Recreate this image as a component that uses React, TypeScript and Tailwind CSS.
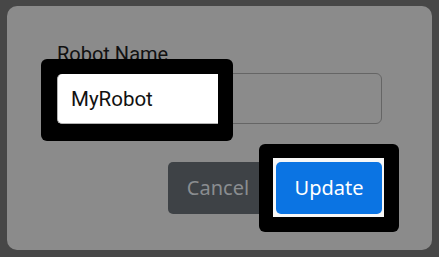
import React from "react";

export default function App() {
  return (
    <div className="relative w-[439px] h-[257px] bg-[#474747] pt-[6px] pl-[7px] pr-[7px] pb-[7px] overflow-hidden">
      <div className="w-full h-full rounded-[10px] bg-[#8b8b8b] pt-[36px] pl-[50px] pr-[50px] flex flex-col">
        <div
          className="text-[20px] leading-[24px] text-[#111]"
          style={{ fontFamily: "Roboto, sans-serif" }}
        >
          Robot Name
        </div>
        <div className="mt-[7px] h-[51px] w-full rounded-[6px] border border-[#656565]" />
        <div className="mt-[38px] flex justify-end gap-[8px]">
          <div
            className="h-[52px] w-[100px] rounded-[5px] bg-[#3e4246] text-[#8a8d90] text-[20px] flex items-center justify-center"
            style={{ fontFamily: "'Noto Sans', sans-serif" }}
          >
            Cancel
          </div>
          <div className="h-[52px] w-[106px]" />
        </div>
      </div>

      {/* spotlight 1 */}
      <div className="absolute left-[41px] top-[59px] w-[192px] h-[82px] rounded-[6px] bg-black overflow-hidden">
        <div className="absolute left-[16px] top-[15px] w-[161px] h-[50px] bg-white rounded-tl-[5px] rounded-bl-[5px] border-l border-b border-[#b3b3b3] flex items-center pl-[13px]">
          <span
            className="text-[20.5px] leading-[24px] text-[#111]"
            style={{ fontFamily: "Roboto, sans-serif" }}
          >
            MyRobot
          </span>
        </div>
      </div>

      {/* spotlight 2 */}
      <div className="absolute left-[259px] top-[144px] w-[140px] h-[88px] rounded-[6px] bg-black">
        <div className="absolute left-[14px] top-[14px] w-[111px] h-[59px] bg-[#f7f7f7] pl-[3px] pt-[4px]">
          <div
            className="h-[52px] w-[106px] rounded-[5px] bg-[#0b74e3] text-white text-[20px] flex items-center justify-center"
            style={{ fontFamily: "'Noto Sans', sans-serif" }}
          >
            Update
          </div>
        </div>
      </div>
    </div>
  );
}
